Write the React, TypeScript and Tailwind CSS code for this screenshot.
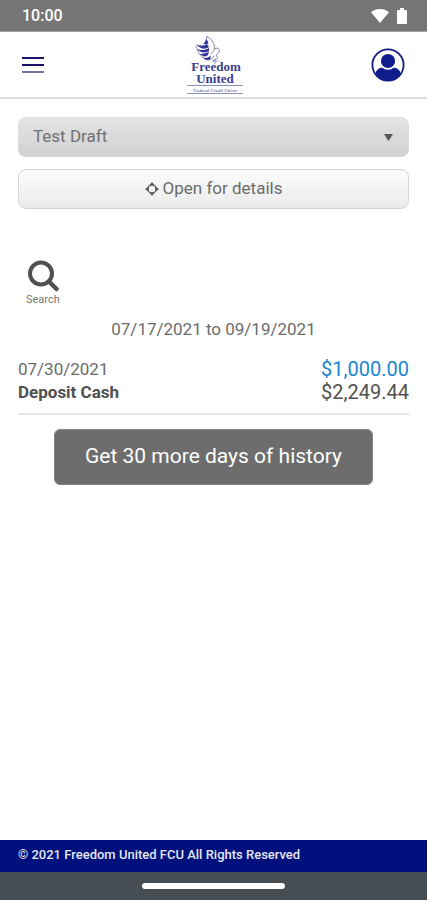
const StatusBar = () => (
  <div className="flex h-8 items-center justify-between border-b border-[#a3a3a3] bg-[#757575] pr-5 pl-[22px] text-white">
    <span className="text-base font-medium">10:00</span>
    <div className="flex items-center gap-2">
      <svg className="h-4 w-[18px]" viewBox="0 0 18 16" fill="currentColor" aria-hidden="true">
        <path d="M0 4.200C2.600 2 5.600 1 9 1s6.400 1 9 3.200L9 15z" />
      </svg>
      <svg className="h-4 w-[10px]" viewBox="0 0 10 16" fill="currentColor" aria-hidden="true">
        <path d="M3 0h4v2h2a1 1 0 0 1 1 1v12a1 1 0 0 1-1 1H1a1 1 0 0 1-1-1V3a1 1 0 0 1 1-1h2z" />
      </svg>
    </div>
  </div>
);

const Logo = () => (
  <svg className="ml-1 h-[60px] w-[58px]" viewBox="0 0 58 60" role="img" aria-label="Freedom United Federal Credit Union">
    {/* Bird */}
    <g fill="none" stroke="#8285b0" strokeWidth="1" strokeLinecap="round">
      <path d="M21 1.500c-1 2-1 4 0 6M21 1.500c4 2 7 6 7.500 10 0 3-1 5-3 7" />
      <path d="M10 11c2 7 5 12 12 14 3 0 5-2 6-4M28.500 14c2-1.500 5-1 5 1.500s-3 3-3 5 2 2 1 3-4 1-5 3" />
      <path d="M27 26h5M29 24v5" strokeWidth="0.800" />
    </g>
    <g fill="#30339a">
      <path d="M10 9c4 2 8 2 11 0l2 3c-4 3-9 2-13-3z" />
      <path d="M11 14c4 1.500 8 1.500 12-1v3c-4 2.500-9 1.500-12-2z" />
      <path d="M14 19c4 0 7-1 9-2.500l-1 3.500c-2 2-5 2-8-1z" />
      <path d="M20.500 4l2 4-2 1.500-3-.5z" />
      <path d="M17 22.500c3 1 6 0 8-2l-1 4c-2 1-5 .5-7-2z" />
    </g>
    <g fill="#3a3d8c" fontFamily="'Liberation Serif', serif" textAnchor="middle">
      <text x="30" y="36" fontSize="13" fontWeight="700">Freedom</text>
      <text x="29" y="48" fontSize="13" fontWeight="700">United</text>
      <text x="29" y="57" fontSize="5" fontStyle="italic">Federal Credit Union</text>
    </g>
    <path d="M1 50.500h56M1 58.500h56" stroke="#8d8fb3" strokeWidth="1" />
  </svg>
);

const Header = () => (
  <header className="flex h-[67px] items-center justify-between border-b-2 border-[#dcdce8] px-[22px]">
    <button type="button" aria-label="Menu" className="flex w-8 flex-col gap-[5px]">
      <span className="h-[2px] w-[22px] bg-[#17126b]" />
      <span className="h-[2px] w-[22px] bg-[#17126b]" />
      <span className="h-[2px] w-[22px] bg-[#77749f]" />
    </button>
    <Logo />
    <button type="button" aria-label="Profile">
      <svg className="size-[34px]" viewBox="0 0 34 34" aria-hidden="true">
        <clipPath id="avatar">
          <circle cx="17" cy="17" r="15.500" />
        </clipPath>
        <circle cx="17" cy="17" r="15.600" fill="none" stroke="#111c7c" strokeWidth="1.800" />
        <g clipPath="url(#avatar)" fill="#111c8c">
          <path d="M4 29c0-6 3-9.500 8-9.500h10c5 0 8 3.500 8 9.500v5H4z" />
          <circle cx="17" cy="13" r="7.900" stroke="#fff" strokeWidth="1.600" />
        </g>
      </svg>
    </button>
  </header>
);

const AccountPicker = () => (
  <div className="flex flex-col gap-3">
    <div className="relative">
      <select
        aria-label="Account"
        defaultValue="draft"
        className="h-10 w-full appearance-none rounded-lg bg-linear-to-b from-[#e3e3e3] to-[#d2d2d2] px-[15px] text-[17px] text-[#707070]"
      >
        <option value="draft">Test Draft</option>
      </select>
      <svg
        className="pointer-events-none absolute top-1/2 right-4 h-2 w-[9px] -translate-y-1/2"
        viewBox="0 0 9 8"
        fill="#555"
        aria-hidden="true"
      >
        <path d="M0 1h9L4.500 8z" />
      </svg>
    </div>
    <button
      type="button"
      className="flex h-10 items-center justify-center gap-1 rounded-lg border border-[#d6d6d6] bg-linear-to-b from-[#fcfcfc] to-[#ebebeb] text-[17px] text-[#6b6b6b]"
    >
      <svg className="size-[14px]" viewBox="0 0 14 14" aria-hidden="true">
        <circle cx="7" cy="7" r="4.200" fill="none" stroke="#777" strokeWidth="1.200" />
        <path d="M7 0l3 3.800H4zM7 14l3-3.800H4zM0 7l3.800-3v6zM14 7l-3.800-3v6z" fill="#5c5c5c" />
      </svg>
      Open for details
    </button>
  </div>
);

const History = () => (
  <section className="mt-[51px] flex flex-col">
    <button type="button" className="ml-2 flex flex-col items-center self-start text-[11px] leading-4 text-[#777]">
      <svg className="size-8" viewBox="0 0 32 32" fill="none" stroke="#505050" aria-hidden="true">
        <circle cx="14" cy="13.500" r="11" strokeWidth="4" />
        <path d="M22 21.500l7.500 7.500" strokeWidth="4.500" strokeLinecap="round" />
      </svg>
      Search
    </button>
    <p className="mt-[9px] text-center text-[17px] leading-6 text-[#6b6b6b]">07/17/2021 to 09/19/2021</p>
    <div className="mt-[17px] flex justify-between border-b-2 border-[#e6e6e6] pb-[9px]">
      <div className="text-[17px] leading-[23px]">
        <p className="text-[#6b6b6b]">07/30/2021</p>
        <p className="font-bold text-[#505050]">Deposit Cash</p>
      </div>
      <div className="text-right text-xl leading-[23px]">
        <p className="text-[#1a87cf]">$1,000.00</p>
        <p className="text-[#505050]">$2,249.44</p>
      </div>
    </div>
    <button
      type="button"
      className="mx-9 mt-[14px] h-14 rounded-md border border-[#858585] bg-[#6d6d6d] text-[21px] text-white"
    >
      Get 30 more days of history
    </button>
  </section>
);

export default function App() {
  return (
    <div className="flex min-h-screen flex-col bg-white font-['Roboto',sans-serif]">
      <StatusBar />
      <Header />
      <main className="flex-1 px-[18px] pt-[18px]">
        <AccountPicker />
        <History />
      </main>
      <footer className="flex h-8 items-center bg-[#00107c] px-[18px] pb-[3px] text-[13px] font-medium text-[#e4e6f4]">
        © 2021 Freedom United FCU All Rights Reserved
      </footer>
      <div className="flex h-7 items-center justify-center bg-[#454c52]">
        <span className="h-[6px] w-1/3 rounded-full bg-white" />
      </div>
    </div>
  );
}
